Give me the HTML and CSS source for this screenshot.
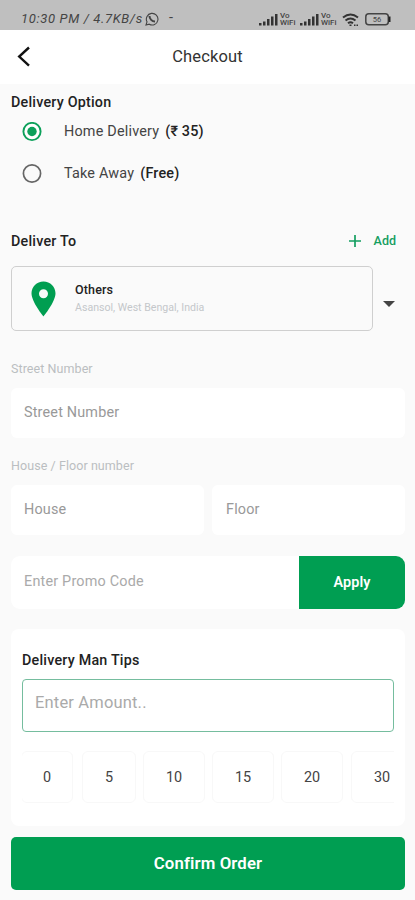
FILE: index.html
```html
<!DOCTYPE html>
<html lang="en">
<head>
<meta charset="utf-8">
<meta name="viewport" content="width=device-width, initial-scale=1">
<title>Checkout</title>
<link rel="stylesheet" href="styles.css">
</head>
<body>
<div class="status">
  <span class="clock">10:30 PM / 4.7KB/s</span>
  <svg class="whatsapp" width="14" height="14" viewBox="0 0 14 14" fill="none" stroke="#444"><path d="M1 13l1-3.2A5.8 5.8 0 1 1 4.3 12.200z" stroke-width="1.1"/><path d="M4.500 4c0 3 2.500 5.500 5.500 5.500" stroke-width="2"/></svg>
  <span class="dash">-</span>
  <div class="signals">
    <svg width="19" height="13" viewBox="0 0 19 13" fill="#333"><path d="M0 10h2.500v2.500H0zM4 8.500h2.500v4H4zM8 6h2.500v6.500H8zM12 3.500h2.500v9H12zM16 1h2.500v11.500H16z"/></svg>
    <span class="vo">Vo<br>WiFi</span>
    <svg width="19" height="13" viewBox="0 0 19 13" fill="#333"><path d="M0 10h2.500v2.500H0zM4 8.500h2.500v4H4zM8 6h2.500v6.500H8zM12 3.500h2.500v9H12zM16 1h2.500v11.500H16z"/></svg>
    <span class="vo">Vo<br>WiFi</span>
    <svg class="wifi" width="17" height="13" viewBox="0 0 17 13" fill="none" stroke="#333" stroke-width="2"><path d="M1 4.500Q8.500-1.500 16 4.500M3.500 7.500q5-4 10 0M6 10.200q2.500-2 5 0"/><path d="M7.500 12.200h2M12 12.200h1.500M14.500 12.200H16" stroke-width="1.500"/></svg>
    <svg class="battery" width="26" height="13" viewBox="0 0 26 13"><rect x=".8" y=".8" width="22.500" height="11" rx="3" fill="none" stroke="#444" stroke-width="1.500"/><path d="M23.500 3.500h2v5.500h-2z" fill="#222"/><text x="12" y="9" text-anchor="middle" class="level">56</text></svg>
  </div>
</div>
<header class="header">
  <svg class="back" width="14" height="22" viewBox="0 0 14 22" fill="none" stroke="#111" stroke-width="2.400"><path d="M12 1.500L2.200 10.500l9.800 9.200"/></svg>
  <h1>Checkout</h1>
</header>
<main>
  <h2 class="option-title"><span>Delivery Option</span></h2>
  <div class="option">
    <svg width="20" height="20" viewBox="0 0 20 20"><circle cx="10" cy="9.500" r="8.600" fill="#fff" stroke="#0ca05a" stroke-width="1.900"/><circle cx="10" cy="9.500" r="4.700" fill="#0ca05a"/></svg>
    <span class="option-name">Home Delivery</span><b class="home-price">(₹ 35)</b>
  </div>
  <div class="option">
    <svg width="20" height="20" viewBox="0 0 20 20"><circle cx="10" cy="9.500" r="8.600" fill="none" stroke="#666" stroke-width="1.700"/></svg>
    <span class="option-name away">Take Away</span><b>(Free)</b>
  </div>
  <div class="deliver">
    <h2>Deliver To</h2>
    <div class="add"><svg width="12" height="12" viewBox="0 0 12 12" stroke="#159e61" stroke-width="1.700"><path d="M6 0v12M0 6h12"/></svg><span>Add</span></div>
  </div>
  <div class="address-row">
    <div class="address">
      <svg width="25" height="36" viewBox="0 0 25 36"><path fill="#009e51" fill-rule="evenodd" d="M12.500.5C5.700.5.500 5.700.500 12.300.500 21 12.500 35.500 12.500 35.500S24.500 21 24.500 12.300C24.500 5.700 19.300.500 12.500.500zm0 7.800a4.500 4.500 0 1 1 0 9 4.500 4.500 0 0 1 0-9z"/></svg>
      <div><div class="place">Others</div><div class="where">Asansol, West Bengal, India</div></div>
    </div>
    <svg class="caret" width="12" height="6" viewBox="0 0 12 6"><path d="M0 0h12L6 6z" fill="#444"/></svg>
  </div>
  <div class="label street">Street Number</div>
  <div class="field">Street Number</div>
  <div class="label house">House / Floor number</div>
  <div class="pair"><div class="field">House</div><div class="field floor">Floor</div></div>
  <div class="promo"><span>Enter Promo Code</span><div class="apply">Apply</div></div>
  <section class="tips">
    <h2>Delivery Man Tips</h2>
    <div class="amount">Enter Amount..</div>
    <div class="chips"><span class="c0">0</span><span class="c5">5</span><span>10</span><span>15</span><span>20</span><span class="c30">30</span></div>
  </section>
  <div class="confirm">Confirm Order</div>
</main>
</body>
</html>
```
FILE: styles.css
```css
* { box-sizing: border-box; }
body {
  margin: 0;
  width: 415px;
  height: 900px;
  overflow: hidden;
  background: #fafafa;
  color: #222;
  font: 14.4px/20px Roboto, "Liberation Sans", sans-serif;
}
svg { display: block; flex: none; }
h1, h2 { margin: 0; font-weight: 500; }
h2 { font-size: 14.3px; line-height: 20px; letter-spacing: .22px; }
.status {
  height: 30px;
  padding: 11px 24px 0 21px;
  background: #bfbfbf;
  display: flex;
  color: #444;
}
.clock {
  width: 124px;
  font: italic 13px/15px Roboto, sans-serif;
  letter-spacing: .65px;
  white-space: nowrap;
}
.whatsapp { margin-top: 1px; }
.dash { margin-left: 10px; line-height: 14px; }
.signals { margin-left: auto; display: flex; align-items: center; height: 16px; }
.vo { width: 17px; margin: 0 3px 0 2px; font-size: 8px; line-height: 7.5px; font-weight: 500; }
.wifi { margin-left: 1px; }
.battery { margin-left: 6px; }
.level { font: 7.5px Roboto, sans-serif; fill: #444; }
.header {
  height: 54px;
  padding: 0 17px;
  background: #fff;
  display: grid;
  grid-template-columns: 14px 1fr 14px;
  align-items: center;
}
.header h1 { text-align: center; font-size: 16.5px; font-weight: 400; line-height: 22px; letter-spacing: .15px; color: #333; }
main { padding: 8px 10px 0 11px; }
.option-title { margin-bottom: -1px; }
.option { height: 42px; padding-left: 11px; display: flex; align-items: center; color: #444; }
.option-name { margin: 0 6px 0 22px; letter-spacing: .2px; }
.option b { font-weight: 500; color: #222; letter-spacing: .15px; }
.deliver { height: 20px; margin-top: 36px; padding-right: 9px; display: flex; justify-content: space-between; align-items: center; }
.add { display: flex; align-items: center; gap: 13px; color: #159e61; font-size: 12.5px; font-weight: 500; }
.address-row { margin-top: 15px; height: 65px; display: flex; align-items: center; }
.address { width: 362px; height: 65px; border: 1.5px solid #cfcfcf; border-radius: 5px; display: flex; align-items: center; gap: 19px; padding-left: 19px; }
.place { font-size: 12.5px; font-weight: 500; line-height: 18px; letter-spacing: .15px; }
.where { font-size: 10.6px; line-height: 18px; color: #c4c7ca; }
.caret { margin: 10px 0 0 10px; }
.label { font-size: 12.5px; line-height: 18px; letter-spacing: .07px; color: #babec1; }
.street { margin: 29px 0 10px; }
.house { margin: 19px 0 10px; }
.field { height: 50px; padding: 0 13px; border-radius: 6px; background: #fff; color: #999; line-height: 50px; letter-spacing: .18px; }
.floor { padding-left: 14px; }
.pair { display: grid; grid-template-columns: 193px 193px; gap: 8px; }
.promo { height: 53px; margin-top: 21px; padding-left: 13px; border-radius: 9px; background: #fff; display: flex; justify-content: space-between; color: #aaa; line-height: 52px; letter-spacing: .2px; }
.apply { width: 106px; background: #009e52; color: #fff; border-radius: 0 9px 9px 0; text-align: center; font-weight: 600; line-height: 54px; letter-spacing: .1px; }
.tips { height: 197px; margin-top: 20px; padding: 21px 11px 0; border-radius: 8px; background: #fff; }
.amount { height: 53px; margin-top: 9px; padding-left: 12px; border: 1.5px solid #75bd9e; border-radius: 4px; color: #aaa; font-size: 16.5px; line-height: 45px; letter-spacing: .17px; }
.chips { height: 52px; margin-top: 19px; display: flex; gap: 7px; overflow: hidden; color: #444; }
.chips span { flex: none; width: 62px; border: 1px solid #f8f8f8; border-radius: 6px; text-align: center; line-height: 52px; }
.chips .c0 { width: 52px; margin-left: -1px; }
.chips .c5 { width: 54px; margin-left: 2px; }
.chips .c30 { margin-left: 1px; }
.confirm { height: 53px; margin-top: 11px; border-radius: 5px; background: #009e52; color: #fff; text-align: center; font-size: 16.8px; font-weight: 600; line-height: 53px; letter-spacing: .12px; }
```
